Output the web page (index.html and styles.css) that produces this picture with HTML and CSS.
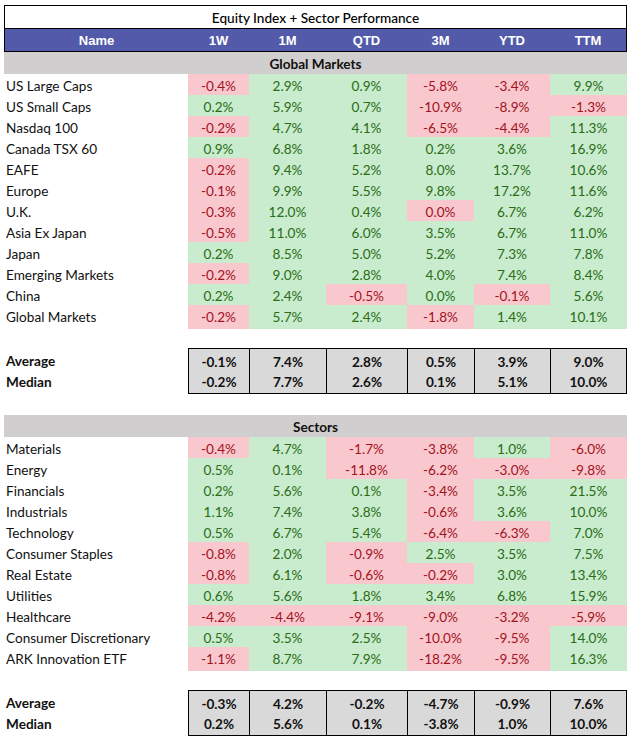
FILE: index.html
```html
<!DOCTYPE html>
<html>
<head>
<meta charset="utf-8">
<link rel="stylesheet" href="styles.css">
</head>
<body>
<div class="sheet">
  <div class="title">Equity Index + Sector Performance</div>
  <div class="row head">
    <div>Name</div><div>1W</div><div>1M</div><div>QTD</div><div>3M</div><div>YTD</div><div>TTM</div>
  </div>

  <div class="section">Global Markets</div>
  <div class="row"><div class="name">US Large Caps</div><div class="n">-0.4%</div><div class="p">2.9%</div><div class="p">0.9%</div><div class="n">-5.8%</div><div class="n">-3.4%</div><div class="p">9.9%</div></div>
  <div class="row"><div class="name">US Small Caps</div><div class="p">0.2%</div><div class="p">5.9%</div><div class="p">0.7%</div><div class="n">-10.9%</div><div class="n">-8.9%</div><div class="n">-1.3%</div></div>
  <div class="row"><div class="name">Nasdaq 100</div><div class="n">-0.2%</div><div class="p">4.7%</div><div class="p">4.1%</div><div class="n">-6.5%</div><div class="n">-4.4%</div><div class="p">11.3%</div></div>
  <div class="row"><div class="name">Canada TSX 60</div><div class="p">0.9%</div><div class="p">6.8%</div><div class="p">1.8%</div><div class="p">0.2%</div><div class="p">3.6%</div><div class="p">16.9%</div></div>
  <div class="row"><div class="name">EAFE</div><div class="n">-0.2%</div><div class="p">9.4%</div><div class="p">5.2%</div><div class="p">8.0%</div><div class="p">13.7%</div><div class="p">10.6%</div></div>
  <div class="row"><div class="name">Europe</div><div class="n">-0.1%</div><div class="p">9.9%</div><div class="p">5.5%</div><div class="p">9.8%</div><div class="p">17.2%</div><div class="p">11.6%</div></div>
  <div class="row"><div class="name">U.K.</div><div class="n">-0.3%</div><div class="p">12.0%</div><div class="p">0.4%</div><div class="n">0.0%</div><div class="p">6.7%</div><div class="p">6.2%</div></div>
  <div class="row"><div class="name">Asia Ex Japan</div><div class="n">-0.5%</div><div class="p">11.0%</div><div class="p">6.0%</div><div class="p">3.5%</div><div class="p">6.7%</div><div class="p">11.0%</div></div>
  <div class="row"><div class="name">Japan</div><div class="p">0.2%</div><div class="p">8.5%</div><div class="p">5.0%</div><div class="p">5.2%</div><div class="p">7.3%</div><div class="p">7.8%</div></div>
  <div class="row"><div class="name">Emerging Markets</div><div class="n">-0.2%</div><div class="p">9.0%</div><div class="p">2.8%</div><div class="p">4.0%</div><div class="p">7.4%</div><div class="p">8.4%</div></div>
  <div class="row"><div class="name">China</div><div class="p">0.2%</div><div class="p">2.4%</div><div class="n">-0.5%</div><div class="p">0.0%</div><div class="n">-0.1%</div><div class="p">5.6%</div></div>
  <div class="row"><div class="name">Global Markets</div><div class="n">-0.2%</div><div class="p">5.7%</div><div class="p">2.4%</div><div class="n">-1.8%</div><div class="p">1.4%</div><div class="p">10.1%</div></div>

  <div class="stats">
    <div class="row top"><div class="name">Average</div><div>-0.1%</div><div>7.4%</div><div>2.8%</div><div>0.5%</div><div>3.9%</div><div>9.0%</div></div>
    <div class="row bot"><div class="name">Median</div><div>-0.2%</div><div>7.7%</div><div>2.6%</div><div>0.1%</div><div>5.1%</div><div>10.0%</div></div>
  </div>

  <div class="section">Sectors</div>
  <div class="row"><div class="name">Materials</div><div class="n">-0.4%</div><div class="p">4.7%</div><div class="n">-1.7%</div><div class="n">-3.8%</div><div class="p">1.0%</div><div class="n">-6.0%</div></div>
  <div class="row"><div class="name">Energy</div><div class="p">0.5%</div><div class="p">0.1%</div><div class="n">-11.8%</div><div class="n">-6.2%</div><div class="n">-3.0%</div><div class="n">-9.8%</div></div>
  <div class="row"><div class="name">Financials</div><div class="p">0.2%</div><div class="p">5.6%</div><div class="p">0.1%</div><div class="n">-3.4%</div><div class="p">3.5%</div><div class="p">21.5%</div></div>
  <div class="row"><div class="name">Industrials</div><div class="p">1.1%</div><div class="p">7.4%</div><div class="p">3.8%</div><div class="n">-0.6%</div><div class="p">3.6%</div><div class="p">10.0%</div></div>
  <div class="row"><div class="name">Technology</div><div class="p">0.5%</div><div class="p">6.7%</div><div class="p">5.4%</div><div class="n">-6.4%</div><div class="n">-6.3%</div><div class="p">7.0%</div></div>
  <div class="row"><div class="name">Consumer Staples</div><div class="n">-0.8%</div><div class="p">2.0%</div><div class="n">-0.9%</div><div class="p">2.5%</div><div class="p">3.5%</div><div class="p">7.5%</div></div>
  <div class="row"><div class="name">Real Estate</div><div class="n">-0.8%</div><div class="p">6.1%</div><div class="n">-0.6%</div><div class="n">-0.2%</div><div class="p">3.0%</div><div class="p">13.4%</div></div>
  <div class="row"><div class="name">Utilities</div><div class="p">0.6%</div><div class="p">5.6%</div><div class="p">1.8%</div><div class="p">3.4%</div><div class="p">6.8%</div><div class="p">15.9%</div></div>
  <div class="row"><div class="name">Healthcare</div><div class="n">-4.2%</div><div class="n">-4.4%</div><div class="n">-9.1%</div><div class="n">-9.0%</div><div class="n">-3.2%</div><div class="n">-5.9%</div></div>
  <div class="row"><div class="name">Consumer Discretionary</div><div class="p">0.5%</div><div class="p">3.5%</div><div class="p">2.5%</div><div class="n">-10.0%</div><div class="n">-9.5%</div><div class="p">14.0%</div></div>
  <div class="row"><div class="name">ARK Innovation ETF</div><div class="n">-1.1%</div><div class="p">8.7%</div><div class="p">7.9%</div><div class="n">-18.2%</div><div class="n">-9.5%</div><div class="p">16.3%</div></div>

  <div class="stats">
    <div class="row top"><div class="name">Average</div><div>-0.3%</div><div>4.2%</div><div>-0.2%</div><div>-4.7%</div><div>-0.9%</div><div>7.6%</div></div>
    <div class="row bot"><div class="name">Median</div><div>0.2%</div><div>5.6%</div><div>0.1%</div><div>-3.8%</div><div>1.0%</div><div>10.0%</div></div>
  </div>
</div>
</body>
</html>
```

FILE: styles.css
```css
* { box-sizing: border-box; }
html, body { margin: 0; padding: 0; background: #fff; }
body {
  font-family: Lato, "Open Sans", sans-serif;
  font-size: 13.6px;
  color: #111;
}
.sheet {
  width: 628px;
  padding: 5px 0 0 4px;
}
.title {
  width: 623px;
  height: 23px;
  border: 1px solid #000;
  border-bottom: none;
  text-align: center;
  line-height: 25px;
  font-size: 13.6px;
  font-weight: 500;
  color: #000;
}
.row {
  display: grid;
  grid-template-columns: 184px 61px 77px 81px 67px 76px 77px;
  width: 623px;
  height: 21px;
}
.row > div {
  text-align: center;
  line-height: 24px;
  white-space: nowrap;
}
.row > .name {
  text-align: left;
  padding-left: 2px;
}
.head {
  height: 24px;
  background: #525aa9;
  border: 1px solid #000;
  color: #fff;
  font-family: "Liberation Sans", Arial, sans-serif;
  font-weight: bold;
  font-size: 13px;
  grid-template-columns: 183px 61px 77px 81px 67px 76px 76px;
}
.head > div { line-height: 23px; }
.section {
  width: 623px;
  height: 22px;
  background: #d0cece;
  text-align: center;
  font-weight: bold;
  line-height: 24px;
}
.p { background: #c8eccd; color: #2a6b16; }
.n { background: #f8c8ce; color: #a3111d; }
.stats {
  margin: 22px 0;
}
.stats .row { font-weight: bold; }
.stats .row > div:not(.name) {
  background: #d9d9d9;
  border-left: 1px solid #000;
}
.stats .row > div:last-child { border-right: 1px solid #000; }
.stats .top { height: 23px; }
.stats .top > div:not(.name) { border-top: 1px solid #000; line-height: 26px; }
.stats .bot { height: 22px; }
.stats .bot > div:not(.name) { border-bottom: 1px solid #000; line-height: 22px; }
.stats .top > .name { line-height: 27px; }
.stats .bot > .name { line-height: 22px; }
```
